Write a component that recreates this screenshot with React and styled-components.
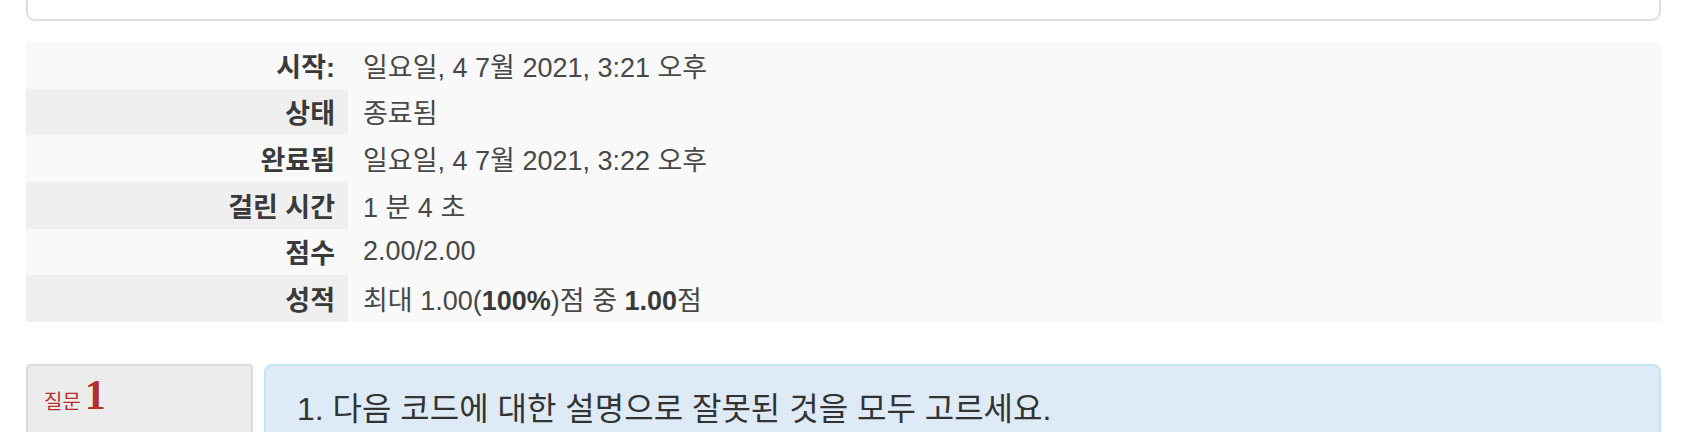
import React from "react";
import styled, { createGlobalStyle } from "styled-components";

const GlobalStyle = createGlobalStyle`
	html, body {
		margin: 0;
		padding: 0;
		background: #ffffff;
		font-family: "Liberation Sans", "Noto Sans CJK KR", sans-serif;
	}
`;

const Page = styled("div")`
	padding: 0 33px 0 26px;
`;

const TopCard = styled("div")`
	height: 19px;
	background: #ffffff;
	border: 2px solid #dfdfdf;
	border-top: none;
	border-radius: 0 0 9px 9px;
`;

const SummaryTable = styled("table")`
	width: 100%;
	margin-top: 21px;
	border-collapse: collapse;
	background: #f9f9f9;
	font-size: 27px;
`;

const Label = styled("th")`
	width: 322px;
	box-sizing: border-box;
	height: 46.67px;
	padding: 0 13px 0 0;
	text-align: right;
	font-weight: 700;
	color: #3a3a3a;
	background: ${(props) => (props.$shaded ? "#efefef" : "#f9f9f9")};
	white-space: nowrap;
`;

const Value = styled("td")`
	height: 46.67px;
	padding: 0 0 0 15px;
	color: #484848;

	b {
		font-weight: 700;
		color: #3a3a3a;
	}
`;

const QuestionRow = styled("div")`
	display: flex;
	gap: 11px;
	margin-top: 42px;
`;

const Info = styled("div")`
	width: 227px;
	min-height: 200px;
	box-sizing: border-box;
	padding: 8px 16px;
	line-height: 1;
	background: #ececec;
	border: 2px solid #dcdcdc;
	border-radius: 4px;
	color: #b52f2a;
`;

const QNoWord = styled("span")`
	font-size: 20px;
`;

const QNumber = styled("span")`
	font-family: "Liberation Serif", serif;
	font-weight: 700;
	font-size: 42px;
	margin-left: 4px;
`;

const Content = styled("div")`
	flex: 1;
	min-height: 200px;
	box-sizing: border-box;
	padding: 17px 31px;
	background: #deebf6;
	border: 2px solid #c3e6ee;
	border-radius: 8px;
`;

const QText = styled("p")`
	margin: 0;
	font-size: 32px;
	color: #333333;
`;

const rows = [
	{ label: "시작:", value: "일요일, 4 7월 2021, 3:21 오후" },
	{ label: "상태", value: "종료됨" },
	{ label: "완료됨", value: "일요일, 4 7월 2021, 3:22 오후" },
	{ label: "걸린 시간", value: "1 분 4 초" },
	{ label: "점수", value: "2.00/2.00" },
	{
		label: "성적",
		value: (
			<>
				최대 1.00(<b>100%</b>)점 중 <b>1.00</b>점
			</>
		),
	},
];

function App() {
	return (
		<>
			<GlobalStyle />
			<Page>
				<TopCard />
				<SummaryTable>
					<tbody>
						{rows.map((row, i) => (
							<tr key={i}>
								<Label $shaded={i % 2 === 1}>{row.label}</Label>
								<Value>{row.value}</Value>
							</tr>
						))}
					</tbody>
				</SummaryTable>
				<QuestionRow>
					<Info>
						<QNoWord>질문</QNoWord>
						<QNumber>1</QNumber>
					</Info>
					<Content>
						<QText>1. 다음 코드에 대한 설명으로 잘못된 것을 모두 고르세요.</QText>
					</Content>
				</QuestionRow>
			</Page>
		</>
	);
}

export default App;
